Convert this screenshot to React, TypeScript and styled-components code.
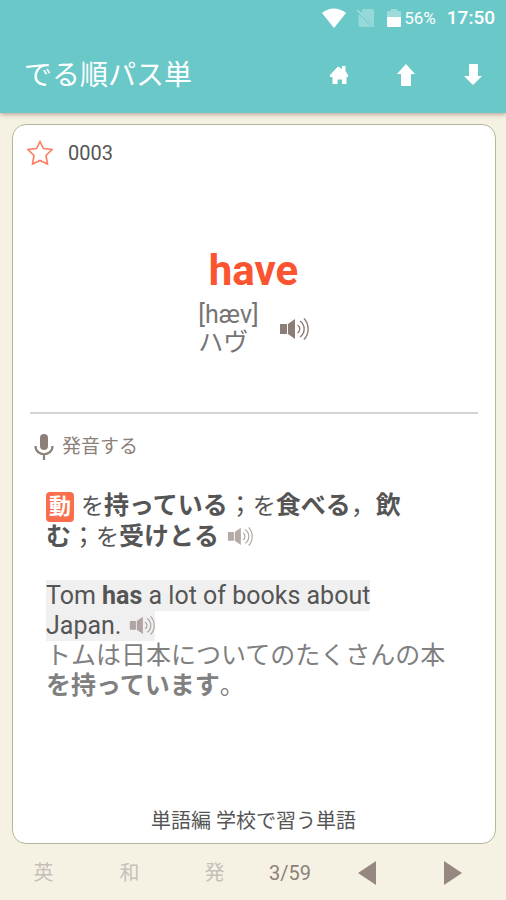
import React from "react";
import styled, { createGlobalStyle } from "styled-components";

const Global = createGlobalStyle`
  *, *::before, *::after { box-sizing: border-box; }
  html, body { margin: 0; padding: 0; }
  body {
    background: #f5f2e4;
    font-family: Roboto, "Noto Sans CJK JP", sans-serif;
    color: #555;
  }
  button { font: inherit; color: inherit; border: 0; background: none; padding: 0; cursor: pointer; }
`;

const Page = styled.div`
  min-height: 100vh;
  display: flex;
  flex-direction: column;
`;

const Header = styled.header`
  background: #6ac8c8;
  color: #fff;
  box-shadow: 0 1px 5px rgba(110, 60, 40, 0.5);
`;

const StatusBar = styled.div`
  height: 36px;
  padding-right: 11px;
  display: flex;
  align-items: center;
  justify-content: flex-end;
`;

const StatusIcon = styled.svg<{ $gap: number }>`
  display: block;
  margin-right: ${(p) => p.$gap}px;
`;

const Battery = styled.span`
  font-size: 17px;
  line-height: 20px;
  margin-right: 11px;
`;

const Clock = styled.time`
  font-size: 19px;
  line-height: 24px;
  font-weight: 500;
`;

const TitleBar = styled.div`
  height: 77px;
  padding-left: 24px;
  display: flex;
  align-items: center;
`;

const Title = styled.h1`
  flex: 1;
  margin: 0;
  padding-top: 3px;
  font-size: 28px;
  line-height: 40px;
  font-weight: 400;
`;

const BarButton = styled.button`
  width: 67px;
  height: 56px;
  display: flex;
  align-items: center;
  justify-content: center;
`;

const Card = styled.main`
  flex: 1;
  margin: 11px 10px 0 12px;
  padding: 13px 15px 7px 14px;
  display: flex;
  flex-direction: column;
  background: #fff;
  border: 1px solid #b3b79b;
  border-radius: 14px;
`;

const CardTop = styled.div`
  display: flex;
  align-items: center;
  gap: 15px;
  font-size: 20px;
  line-height: 30px;
`;

const IconButton = styled.button`
  display: flex;
`;

const Headword = styled.section`
  height: 244px;
  padding-top: 77px;
  display: flex;
  flex-direction: column;
  align-items: center;
`;

const Word = styled.h2`
  margin: 0;
  font-size: 42px;
  line-height: 52px;
  font-weight: 700;
  color: #fb5430;
`;

const Reading = styled.div`
  display: flex;
  align-items: center;
  gap: 20px;
  padding-top: 4px;
  font-size: 25px;
  line-height: 28px;
  color: #757575;
`;

const Divider = styled.hr`
  width: auto;
  margin: 0 2px 0 3px;
  border: 0;
  border-top: 2px solid #d4d4d4;
`;

const PronounceButton = styled.button`
  align-self: flex-start;
  margin: 18px 0 0 7px;
  display: flex;
  align-items: center;
  gap: 8px;
  font-size: 19px;
  line-height: 30px;
  color: #8d8079;
`;

const Entry = styled.section`
  padding: 29px 12px 0 19px;
  font-size: 25px;
  line-height: 30px;
`;

const Paragraph = styled.p<{ $tone?: string }>`
  margin: 0;
  color: ${(p) => p.$tone ?? "#555"};
`;

const Meaning = styled(Paragraph)`
  margin-bottom: 28px;
`;

const Tag = styled.span`
  padding: 0 3px;
  margin-right: 7px;
  border-radius: 4px;
  background: #fb6d4c;
  color: #fff;
  display: inline-block;
  font-size: 22px;
  font-weight: 700;
`;

const Particle = styled.span`
  font-size: 23px;
`;

const Highlight = styled.span`
  padding: 1px 0;
  background: #f0f0f0;
  font-size: 25px;
`;

const InlineButton = styled.button`
  display: inline-block;
  height: 20px;
  vertical-align: -3px;
  margin-left: 8px;
`;

const Source = styled.footer`
  margin-top: auto;
  text-align: center;
  font-size: 20px;
  line-height: 30px;
`;

const BottomNav = styled.nav`
  height: 56px;
  padding: 2px 11px 0 0;
  display: grid;
  grid-template-columns: 87fr 85fr 85fr 66fr 88fr 84fr;
  align-items: center;
  justify-items: center;
  font-size: 20px;
  line-height: 30px;
  color: #8d8079;
`;

const ModeButton = styled.button`
  color: #c6c0b9;
`;

const Speaker = ({ size, faded }: { size: number; faded?: boolean }) => (
  <svg width={size} height={(size * 5) / 6} viewBox="0 0 30 25" fill="none" opacity={faded ? 0.65 : 1}>
    <path d="M1 7h7v10H1z M9 7 16 2v20L9 17z" fill="#8d7d77" />
    <path d="M18.500 8c3 2 3 6 0 8M21 4c5.500 4 5.500 12 0 16M25 1.500c5.500 6 5.500 15 0 21" stroke="#8d7d77" strokeWidth="1.400" />
  </svg>
);

export default function App() {
  return (
    <>
      <Global />
      <Page>
        <Header>
          <StatusBar>
            <StatusIcon $gap={9} width="26" height="20" viewBox="0 0 26 20" fill="#fff">
              <path d="M1 5C8-1 18-1 25 5L13 20z" />
            </StatusIcon>
            <StatusIcon $gap={11} width="20" height="20" viewBox="0 0 20 20">
              <path d="M7 1h9q2 0 2 2v14L5 5zM2.500 6 16 19H4.500q-2 0-2-2z" fill="#fff" opacity=".3" />
              <path d="M1 2 18 19" stroke="#fff" opacity=".4" strokeWidth="1.500" />
            </StatusIcon>
            <StatusIcon $gap={3} width="14" height="20" viewBox="0 0 14 20" fill="#fff">
              <path d="M4 1h6v2h3q1 0 1 1v5H0V4q0-1 1-1h3z" opacity=".35" />
              <path d="M0 9h14v9q0 1-1 1H1q-1 0-1-1z" />
            </StatusIcon>
            <Battery>56%</Battery>
            <Clock>17:50</Clock>
          </StatusBar>
          <TitleBar>
            <Title>でる順パス単</Title>
            <BarButton aria-label="ホーム">
              <svg width="20" height="20" viewBox="0 0 20 20" fill="#fff">
                <path d="M9 1.500 13 4V1h3.500v5L19 10v2h-1.500v6.500q0 .5-.5.500h-4v-4.500H8.500V19H4q-.5 0-.5-.5V12H1v-2z" />
              </svg>
            </BarButton>
            <BarButton aria-label="前へ">
              <svg width="20" height="24" viewBox="0 0 20 24" fill="#fff">
                <path d="M10 1 19 11H15V22q0 1-1 1H6q-1 0-1-1V11H1z" />
              </svg>
            </BarButton>
            <BarButton aria-label="次へ">
              <svg width="20" height="24" viewBox="0 0 20 24" fill="#fff">
                <path d="M10 22 19 13H15V2q0-1-1-1H7Q6 1 6 2V13H1z" />
              </svg>
            </BarButton>
          </TitleBar>
        </Header>

        <Card>
          <CardTop>
            <IconButton aria-label="お気に入り">
              <svg width="26" height="26" viewBox="0 0 26 26" fill="none" stroke="#fb7d63" strokeWidth="1.600">
                <path d="M13 1.500 16.500 8.500 25 9.500l-6 6 1.500 8.500L13 20.500l-7.500 3.500L7 15.500 1 9.500l8.500-1z" />
              </svg>
            </IconButton>
            <span>0003</span>
          </CardTop>
          <Headword>
            <Word>have</Word>
            <Reading>
              <span>
                [hæv]
                <br />
                ハヴ
              </span>
              <IconButton aria-label="単語を再生">
                <Speaker size={30} />
              </IconButton>
            </Reading>
          </Headword>
          <Divider />
          <PronounceButton>
            <svg width="20" height="28" viewBox="0 0 20 28" fill="none" stroke="#8d8079">
              <rect x="6" y="1" width="8" height="16" rx="4" fill="#8d8079" stroke="none" />
              <path d="M1.500 13c0 11 17 11 17 0M10 21v6" strokeWidth="2.200" />
            </svg>
            発音する
          </PronounceButton>
          <Entry>
            <Meaning>
              <Tag>動</Tag>
              <Particle>を</Particle>
              <b>持っている</b>；<Particle>を</Particle>
              <b>食べる</b>，<b>飲<br />む</b>；<Particle>を</Particle>
              <b>受けとる</b>
              <InlineButton aria-label="意味を再生">
                <Speaker size={26} faded />
              </InlineButton>
            </Meaning>
            <Paragraph>
              <Highlight>
                Tom <b>has</b> a lot of books about
                <br />
                Japan.
                <InlineButton aria-label="例文を再生">
                  <Speaker size={26} faded />
                </InlineButton>
              </Highlight>
            </Paragraph>
            <Paragraph $tone="#808080">
              トムは日本についてのたくさんの本
              <br />
              <b>を持っています</b>。
            </Paragraph>
          </Entry>
          <Source>単語編 学校で習う単語</Source>
        </Card>

        <BottomNav>
          <ModeButton>英</ModeButton>
          <ModeButton>和</ModeButton>
          <ModeButton>発</ModeButton>
          <span>3/59</span>
          <IconButton aria-label="前のカード">
            <svg width="18" height="24" viewBox="0 0 18 24" fill="#968881">
              <path d="M18 0v24L0 12z" />
            </svg>
          </IconButton>
          <IconButton aria-label="次のカード">
            <svg width="18" height="24" viewBox="0 0 18 24" fill="#968881">
              <path d="M0 0v24l18-12z" />
            </svg>
          </IconButton>
        </BottomNav>
      </Page>
    </>
  );
}
